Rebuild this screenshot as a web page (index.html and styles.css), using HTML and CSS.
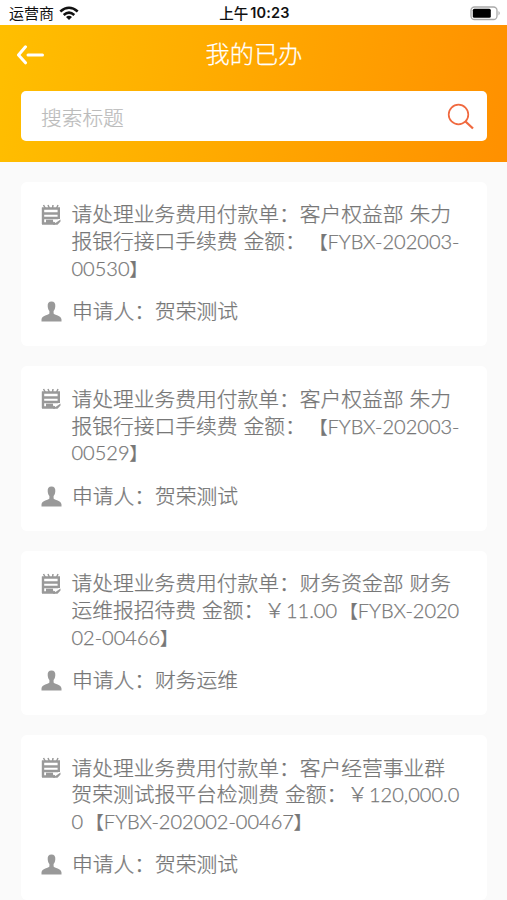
FILE: index.html
```html
<!DOCTYPE html>
<html lang="zh-CN">
<head>
<meta charset="utf-8">
<title>我的已办</title>
<link rel="stylesheet" href="styles.css">
</head>
<body>
<svg class="defs" width="0" height="0">
  <symbol id="note" viewBox="0 0 21 22">
    <path d="M2 3.500V20M1 19.500H14M1 4.500H19M17.800 4V15M3 9.500H17M3 14H17M5 17H12" fill="none" stroke="currentColor" stroke-width="2.400"/>
    <path d="M2.500 1L4.500 4.500M7 1L8.500 4.500M12 1L11.500 4.500M17 1L15.500 4.500" fill="none" stroke="currentColor" stroke-width="1.500"/>
    <path d="M12.500 17.500L14.500 19L19.500 15.500V17.500L16.500 20.700H12Z"/>
  </symbol>
  <symbol id="person" viewBox="0 0 21 21">
    <path d="M10.500 0.500C13.300 0.500 14.500 2.500 14.300 5.200C14.200 7.500 13.400 9 12.600 10.100V12.400C13 13.800 20.500 14.200 20.500 18.500V20.500H0.500V18.500C0.500 14.200 8 13.800 8.400 12.400V10.100C7.600 9 6.800 7.500 6.700 5.200C6.500 2.500 7.700 0.500 10.500 0.500Z"/>
  </symbol>
</svg>
<div class="status">
  <div class="carrier">运营商
    <svg width="20" height="15" viewBox="0 0 20 15" fill="none" stroke="#111" stroke-width="2.600"><path d="M1.300 5.500Q10 -2 18.700 5.500M4.700 9Q10 4.400 15.300 9"/><path d="M10 14L7 11Q10 8.700 13 11Z" fill="#111" stroke="none"/></svg>
  </div>
  <div class="time"><span class="ampm">上午</span>10:23</div>
  <svg class="battery" width="31" height="15" viewBox="0 0 31 15"><rect x="1" y="1" width="26" height="12.500" rx="3.500" fill="#fff" stroke="#aaa" stroke-width="1.300"/><rect x="2.800" y="2.800" width="18" height="9" rx="1.500" fill="#000"/><path d="M28.500 5Q31 7.200 28.500 9.500Z" fill="#aaa"/></svg>
</div>
<header class="header">
  <div class="nav">
    <svg class="back" width="28" height="20" viewBox="0 0 28 20" fill="none" stroke="#fff" stroke-width="3" stroke-linecap="round" stroke-linejoin="round"><path d="M9.500 1.800L2.500 10L9.500 17.800M12 10H26.500"/></svg>
    <h1 class="title">我的已办</h1>
  </div>
  <div class="search">
    <span class="placeholder">搜索标题</span>
    <svg class="glass" width="28" height="28" viewBox="0 0 28 28" fill="none" stroke="#f0693f"><circle cx="11.500" cy="11.500" r="9.800" stroke-width="1.700"/><path d="M18.500 18.500L26 25.500" stroke-width="2.300"/></svg>
  </div>
</header>
<main class="list">
  <article class="card">
    <div class="row"><svg class="icon note"><use href="#note"/></svg><div class="text">请处理业务费用付款单：客户权益部 朱力<br>报银行接口手续费 金额：<span class="gap"></span><span class="open">【</span><span class="en">FYBX-202003-</span><br><span class="en">00530</span><span class="close">】</span></div></div>
    <div class="row applicant"><svg class="icon"><use href="#person"/></svg><div class="text">申请人：贺荣测试</div></div>
  </article>
  <article class="card">
    <div class="row"><svg class="icon note"><use href="#note"/></svg><div class="text">请处理业务费用付款单：客户权益部 朱力<br>报银行接口手续费 金额：<span class="gap"></span><span class="open">【</span><span class="en">FYBX-202003-</span><br><span class="en">00529</span><span class="close">】</span></div></div>
    <div class="row applicant"><svg class="icon"><use href="#person"/></svg><div class="text">申请人：贺荣测试</div></div>
  </article>
  <article class="card">
    <div class="row"><svg class="icon note"><use href="#note"/></svg><div class="text">请处理业务费用付款单：财务资金部 财务<br>运维报招待费 金额：￥<span class="gap"></span><span class="en">11.00</span><span class="open">【</span><span class="en">FYBX-2020</span><br><span class="en">02-00466</span><span class="close">】</span></div></div>
    <div class="row applicant"><svg class="icon"><use href="#person"/></svg><div class="text">申请人：财务运维</div></div>
  </article>
  <article class="card">
    <div class="row"><svg class="icon note"><use href="#note"/></svg><div class="text">请处理业务费用付款单：客户经营事业群<br>贺荣测试报平台检测费 金额：￥<span class="gap"></span><span class="en">120,000.0</span><br><span class="en">0</span><span class="open">【</span><span class="en">FYBX-202002-00467</span><span class="close">】</span></div></div>
    <div class="row applicant"><svg class="icon"><use href="#person"/></svg><div class="text">申请人：贺荣测试</div></div>
  </article>
</main>
</body>
</html>
```
FILE: styles.css
```css
* { box-sizing: border-box; }
body {
  margin: 0;
  height: 900px;
  overflow: hidden;
  background: #fafafa;
  font-family: "Noto Sans CJK SC", sans-serif;
  text-spacing-trim: space-all;
}
.defs { display: block; }
.status {
  height: 25px;
  background: #fff;
  display: grid;
  grid-template-columns: 1fr auto 1fr;
  align-items: center;
  padding: 1px 6px 0 9px;
  color: #111;
  font-size: 15px;
  line-height: 22px;
}
.carrier { display: flex; align-items: center; gap: 5px; }
.time { font-family: Inter, sans-serif; font-weight: 600; font-size: 14.5px; display: flex; gap: 2px; letter-spacing: 0.2px; padding-right: 1px; }
.ampm { font-family: "Noto Sans CJK SC", sans-serif; font-weight: 500; font-size: 14.5px; letter-spacing: 0; }
.battery { justify-self: end; }
.header {
  height: 137px;
  padding: 0 20px 0 21px;
  background: linear-gradient(100deg, #ffbf00, #ff9000);
}
.nav {
  height: 66px;
  display: grid;
  grid-template-columns: 28px 1fr 28px;
  align-items: center;
  margin-left: -5px;
  margin-right: -5px;
  padding-bottom: 7px;
}
.title { margin: 0; font-size: 24.2px; font-weight: 300; color: #fff; text-align: center; line-height: 34px; padding-bottom: 3px; -webkit-text-stroke: 0.25px #fff; }
.search {
  height: 50px;
  padding: 0 12px 0 20px;
  display: flex;
  align-items: center;
  justify-content: space-between;
  background: #fff;
  border-radius: 5px;
}
.glass { margin-top: 2px; }
.placeholder { font-size: 20.7px; font-weight: 300; color: #bbb; line-height: 30px; padding-top: 2px; -webkit-text-stroke: 0.2px #bbb; }
.list { display: flex; flex-direction: column; gap: 20px; padding: 20px 20px 0 21px; }
.card {
  flex: none;
  height: 164.4px;
  padding: 18.4px 20px 0;
  background: #fff;
  border-radius: 6px;
}
.row { display: flex; gap: 9.5px; }
.applicant { margin-top: 16.4px; gap: 10px; }
.icon { flex: none; width: 21px; height: 21px; margin-top: 4px; color: #999; fill: #999; }
.note { height: 22px; margin-top: 3.6px; }
.text { white-space: nowrap; font-size: 20.75px; font-weight: 300; line-height: 26.8px; color: #777; word-spacing: 1.4px; -webkit-text-stroke: 0.25px #777; }
.en { font-family: Lato, sans-serif; font-size: 20px; line-height: 1; }
.open, .close { font-size: 18px; line-height: 1; }
.open { margin-left: 2.75px; }
.close { margin-right: 2.75px; }
.gap { display: inline-block; width: 1px; }
```
